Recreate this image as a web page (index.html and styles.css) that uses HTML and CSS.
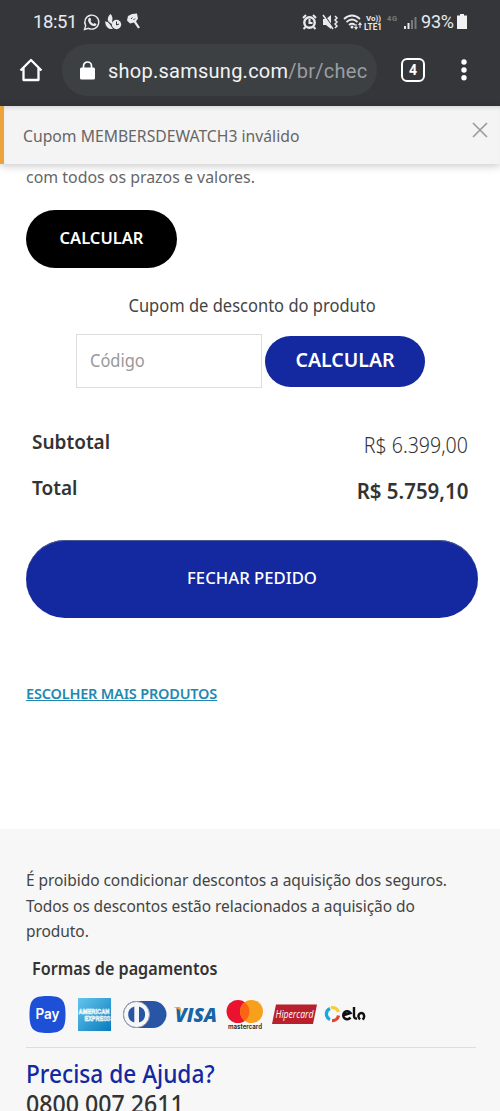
FILE: index.html
```html
<!DOCTYPE html>
<html lang="pt-BR">
<head>
<meta charset="utf-8">
<title>Carrinho</title>
<link rel="stylesheet" href="styles.css">
</head>
<body>
<header class="chrome">
  <div class="status">
    <span class="clock">18:51</span>
    <svg class="status-left" width="60" height="20" viewBox="0 0 60 20">
      <path d="M1.500 17.500l1.200-3.900A7 7 0 1 1 5.500 16.300z" fill="none" stroke="#e8eaed" stroke-width="1.400"/>
      <path d="M5.500 6.500q1.500-1.500 2.200 0l.5 1.600-.8 1q1.200 2.200 3 2.800l1-1 2 1q.4 1.400-1.300 2.100Q7.500 14.500 5.300 9.500 4.800 7.700 5.500 6.500z" fill="#e8eaed"/>
      <path d="M25 9q-1-4 2.500-7 3 3 1.500 7.500 1 1-.5 2.500zM22 9.500q3-.5 5 3l3 4.500q-7 1-8-7.500z" fill="#e8eaed"/>
      <circle cx="33.500" cy="12.500" r="4.700" fill="#e8eaed"/><path d="M33.500 9.500V13l2.500-1" fill="none" stroke="#35363a"/>
      <path d="M45 4l4-2 5-.5 1 5-2 3 4 6-2 1-4-6-4 1-3-3z" fill="#e8eaed"/><path d="M48 7l1.500-1.500m1 2.500 1.500-1.500" stroke="#35363a"/>
    </svg>
    <svg class="status-right" width="118" height="20" viewBox="0 0 118 20">
      <g fill="none" stroke="#e8eaed" stroke-width="2.400"><circle cx="8.500" cy="10.500" r="5.200"/><path d="M8.500 7v4h3M2 6l3-3m7 0 3 3M4.500 15l-2 2m10-2 2 2" stroke-width="2"/></g>
      <path d="M22 7h3l5-4v14l-5-4h-3z" fill="#e8eaed"/><path d="M23 3l10 14" stroke="#35363a" stroke-width="1.500"/><path d="M22 3l10 14M34 4l2 2-2 2 2 2-2 2 2 2-2 2" fill="none" stroke="#e8eaed" stroke-width="1.500"/>
      <g fill="none" stroke="#e8eaed" stroke-width="1.700"><path d="M43 7q8-7 16 0M45.500 10q5.500-5 11 0M48 13q3-2.500 6 0"/><path d="M55 12v5m-1.500-2 1.500 2 1.500-2M59 16v-5m-1.500 2 1.500-2 1.500 2" stroke-width="1.100"/></g>
      <circle cx="51" cy="15" r="1.500" fill="#e8eaed"/>
      <g font-family="Roboto, sans-serif" font-weight="700" fill="#e8eaed"><text x="65" y="9" font-size="8" textLength="15" lengthAdjust="spacingAndGlyphs">Vo))</text><text x="63" y="17.500" font-size="8.500" textLength="18" lengthAdjust="spacingAndGlyphs">LTE1</text><text x="86" y="9" font-size="7.500" fill="#777a7d" textLength="10">4G</text></g>
      <path d="M104 14v3M107.500 11v6" stroke="#e8eaed" stroke-width="2"/><path d="M111 8v9M114.500 5v12" stroke="#77797c" stroke-width="2"/>
    </svg>
    <span class="percent">93%</span>
    <svg class="battery" width="10" height="15" viewBox="0 0 10 15"><path d="M3 0h4v1.500h3V15H0V1.500h3z" fill="#f2f2f2"/></svg>
  </div>
  <div class="toolbar">
    <svg class="home" width="24" height="24" viewBox="0 0 24 24"><path d="M1.500 12.500L12 2l10.500 10.500M4.500 10v12h15V10" fill="none" stroke="#fff" stroke-width="2.300" stroke-linejoin="round"/></svg>
    <div class="address">
      <svg width="15" height="19" viewBox="0 0 15 19"><path d="M3.500 8V5a4 4 0 0 1 8 0v3" fill="none" stroke="#fff" stroke-width="1.700"/><rect y="6.500" width="15" height="12" rx="1.500" fill="#fff"/></svg>
      <span class="url">shop.samsung.com<span class="path">/br/chec</span></span>
    </div>
    <span class="tabs">4</span>
    <svg class="more" width="6" height="22" viewBox="0 0 6 22"><g fill="#fff"><circle cx="3" cy="3" r="2.700"/><circle cx="3" cy="11" r="2.700"/><circle cx="3" cy="18.800" r="2.700"/></g></svg>
  </div>
</header>
<div class="notice">
  <span class="notice-text">Cupom MEMBERSDEWATCH3 inválido</span>
  <svg class="close" width="16" height="16" viewBox="0 0 16 16"><path d="M1 1l14 14M15 1L1 15" stroke="#999" stroke-width="1.600"/></svg>
</div>
<main class="cart">
  <p class="terms"><span>com todos os prazos e valores.</span></p>
  <button class="button shipping">CALCULAR</button>
  <h2 class="coupon-title"><span>Cupom de desconto do produto</span></h2>
  <div class="coupon">
    <div class="field"><span>Código</span></div>
    <button class="button apply">CALCULAR</button>
  </div>
  <div class="row subtotal"><span class="label">Subtotal</span><span class="value">R$ 6.399,00</span></div>
  <div class="row total"><span class="label">Total</span><span class="value">R$ 5.759,10</span></div>
  <button class="button checkout">FECHAR PEDIDO</button>
  <a class="more-products">ESCOLHER MAIS PRODUTOS</a>
</main>
<footer class="footer">
  <p class="legal">É proibido condicionar descontos a aquisição dos seguros.<br>Todos os descontos estão relacionados a aquisição do<br>produto.</p>
  <h3 class="pay-title"><span>Formas de pagamentos</span></h3>
  <div class="brands">
    <svg width="342" height="40" viewBox="0 0 342 40">
      <defs><linearGradient id="amex" x2="1" y2="1"><stop stop-color="#65c5ec"/><stop offset="1" stop-color="#087bbd"/></linearGradient></defs>
      <path d="M21.500 2C36 2 39.500 6 39.500 20.500S36 39 21.500 39 3.500 35 3.500 20.500 7 2 21.500 2z" fill="#1d4fd7"/>
      <text x="9.500" y="24.500" class="pay" textLength="24" lengthAdjust="spacingAndGlyphs">Pay</text>
      <path d="M52 4h33v33H52z" fill="url(#amex)"/>
      <g class="amex"><text x="52.500" y="19.500" textLength="31" lengthAdjust="spacingAndGlyphs">AMERICAN</text><text x="58.500" y="27" textLength="26" lengthAdjust="spacingAndGlyphs">EXPRESS</text></g>
      <rect x="97" y="7" width="43.500" height="27" rx="13.500" fill="#2855a5"/>
      <circle cx="110.500" cy="20.500" r="13" fill="#f7f7f7" stroke="#9aa0aa"/><path d="M108.300 12.500a8.300 8.300 0 0 0 0 16zM113 12.500a8.300 8.300 0 0 1 0 16z" fill="#2855a5"/>
      <text x="149" y="27.500" class="visa" textLength="42" lengthAdjust="spacingAndGlyphs">VISA</text><path d="M147.500 13h6.500l2 6q-2-4-8.500-6z" fill="#efa42f"/>
      <circle cx="212" cy="17.500" r="11.500" fill="#eb1230"/><circle cx="225.500" cy="17.500" r="11.500" fill="#f8a01c"/><path d="M218.750 8.200a11.500 11.500 0 0 1 0 18.600 11.500 11.500 0 0 1 0-18.600" fill="#fb6415"/>
      <text x="202" y="34.500" class="master" textLength="34" lengthAdjust="spacingAndGlyphs">mastercard</text>
      <path d="M250 10.500h41l-4 19.500h-41z" fill="#b91f2c"/><text x="249.500" y="23.500" class="hiper" textLength="38" lengthAdjust="spacingAndGlyphs">Hipercard</text>
      <g fill="none" stroke-width="3.200"><path d="M304 14.500a6 6 0 0 0 0 11" stroke="#1aa7dc"/><path d="M305 13.800a6 6 0 0 1 7.500 4.200" stroke="#f5cf2f"/><path d="M312.500 21.500a6 6 0 0 1-6.500 5" stroke="#e6442e"/></g>
      <g fill="none" stroke="#111" stroke-width="2.400"><path d="M316.500 21.500l8-2.500a4 4 0 1 0 0 4.500M328 13v8.500q0 3.500 3 3M334 25.500q-2.500-2.500-1-5.200 2-2.300 4.500-.3 1.700 3.500-1 5.500"/></g>
    </svg>
  </div>
  <h2 class="help"><span>Precisa de Ajuda?</span></h2>
  <p class="phone"><span>0800 007 2611</span></p>
</footer>
</body>
</html>
```
FILE: styles.css
```css
* { box-sizing: border-box; }
body { margin: 0; height: 1111px; overflow: hidden; background: #fff; color: #333; font-family: "Noto Sans", sans-serif; }
p, h2, h3 { margin: 0; font-weight: 400; white-space: nowrap; }
.chrome { height: 106px; background: #35363a; color: #e8eaed; font-family: Roboto, sans-serif; overflow: hidden; }
.status { display: flex; align-items: center; height: 42px; padding: 1px 32px 0 33px; font-size: 18px; }
.clock { width: 50px; font-size: 18.5px; letter-spacing: -.4px; }
.status-right { margin-left: 158px; }
.percent { margin-left: 2px; width: 35px; letter-spacing: -.2px; white-space: nowrap; }
.battery { margin-left: 1px; }
.toolbar { display: flex; align-items: center; margin-top: 2px; height: 52px; padding-left: 19px; }
.address { display: flex; align-items: center; width: 315px; height: 52px; margin-left: 19px; padding-left: 18px; border-radius: 26px; background: #3c4043; }
.url { margin-left: 13px; padding-top: 2px; font-size: 20px; letter-spacing: .25px; color: #f1f3f4; white-space: nowrap; }
.path { color: #9a9da1; }
.tabs { width: 24px; height: 24px; margin-left: 24px; border: 2px solid #fff; border-radius: 6px; color: #fff; font-size: 14px; font-weight: 700; line-height: 20px; text-align: center; }
.more { margin-left: 36px; }
.notice { position: relative; display: flex; justify-content: space-between; height: 58px; padding: 0 12px 0 19px; border-left: 4px solid #eba43c; background: #f4f4f4; box-shadow: 0 2px 8px rgba(0,0,0,.22), inset 0 4px 5px -3px rgba(0,0,0,.15); }
.notice-text { font-size: 16.5px; line-height: 60px; color: #666; white-space: nowrap; transform: scaleX(.953); transform-origin: left; }
.close { margin-top: 16px; }
.cart { height: 665px; padding: 0 22px 0 26px; }
.terms { height: 46px; line-height: 25px; font-size: 16.5px; color: #666; }
.terms span, .pay-title span, .help span, .phone span, .field span { display: inline-block; transform-origin: left; }
.terms span { transform: scaleX(.964); }
.button { display: block; padding: 0 0 3px; border: 0; color: #fff; font-family: inherit; font-weight: 600; white-space: nowrap; }
.shipping { width: 151px; height: 58px; border-radius: 29px; background: #000; font-size: 16.5px; }
.coupon-title { margin-top: 22px; height: 31px; line-height: 30px; font-size: 17.5px; text-align: center; color: #444; }
.coupon-title span { display: inline-block; transform: scaleX(.943); }
.coupon { display: flex; align-items: center; gap: 3px; margin: 13px 0 0 50px; }
.field { width: 186px; height: 54px; padding-left: 13px; border: 1px solid #ddd; line-height: 50px; font-size: 17.5px; color: #999; }
.field span { transform: scaleX(.94); }
.apply { width: 160px; height: 51px; border-radius: 26px; background: #1428a0; font-size: 19.5px; }
.row { display: flex; justify-content: space-between; height: 46px; padding: 0 10px 0 6px; }
.subtotal { margin-top: 38px; }
.label { font-size: 19px; font-weight: 600; line-height: 32px; }
.value { font-size: 21px; line-height: 38px; transform-origin: right; }
.subtotal .value { font-weight: 350; transform: scaleX(.93); }
.total .value { font-size: 21.5px; font-weight: 600; transform: scaleX(.952); }
.checkout { width: 452px; height: 78px; margin-top: 22px; border-radius: 39px; background: #1428a0; font-size: 16.7px; font-weight: 500; box-shadow: inset 0 1px #4d5890; }
.more-products { display: block; margin-top: 63px; width: max-content; line-height: 24px; font-size: 14.5px; font-weight: 600; letter-spacing: -.19px; color: #2189b1; text-decoration: underline; white-space: nowrap; }
.footer { height: 282px; padding: 39px 24px 0 26px; background: #f7f7f7; overflow: hidden; }
.legal { line-height: 25.5px; font-size: 15.5px; letter-spacing: -.06px; color: #444; }
.pay-title { margin-top: 12px; padding-left: 6px; line-height: 24px; font-size: 17px; font-weight: 600; }
.pay-title span { transform: scaleX(.95); }
.brands { height: 67px; padding-top: 13px; border-bottom: 1px solid #ddd; }
.brands svg { display: block; }
.help { margin-top: 11px; line-height: 30px; font-size: 24.5px; font-weight: 500; color: #1428a0; }
.help span { transform: scaleX(.926); }
.phone { line-height: 30px; font-size: 24.5px; font-weight: 500; }
.phone span { transform: scaleX(.945); }
.pay { fill: #fff; font: 600 14px Inter, sans-serif; }
.amex { fill: none; stroke: #fff; stroke-width: .6px; font: 700 6.5px "Liberation Sans", sans-serif; }
.visa { fill: #1864a4; font: italic 800 20px "Open Sans", sans-serif; }
.master { fill: #222; font: 600 7px Inter, sans-serif; }
.hiper { fill: #fff; font: italic 500 10px "Open Sans", sans-serif; }
```
